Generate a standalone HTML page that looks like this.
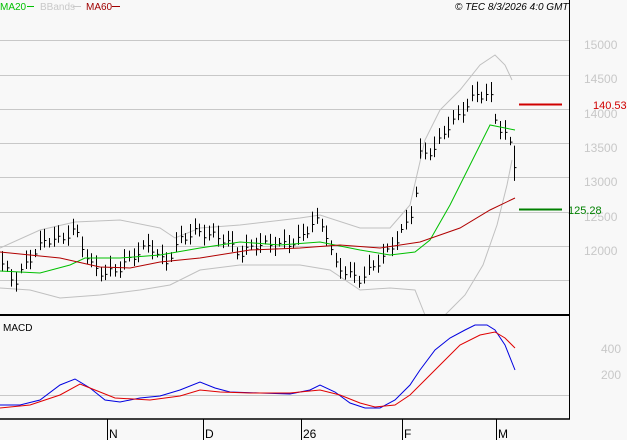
<!DOCTYPE html>
<html><head><meta charset="utf-8"><style>
body{margin:0;background:#f8f8f8;}
svg{display:block;font-family:"Liberation Sans",sans-serif;}
</style></head><body>
<svg id="s" width="627" height="440" xmlns="http://www.w3.org/2000/svg">
<rect width="627" height="440" fill="#f8f8f8"/>
<g stroke="#c8c8c8" stroke-width="1" fill="none">
<line x1="0" y1="40.5" x2="569" y2="40.5"/>
<line x1="0" y1="75.5" x2="569" y2="75.5"/>
<line x1="0" y1="109.5" x2="569" y2="109.5"/>
<line x1="0" y1="143.5" x2="569" y2="143.5"/>
<line x1="0" y1="177.5" x2="569" y2="177.5"/>
<line x1="0" y1="212.5" x2="569" y2="212.5"/>
<line x1="0" y1="246.5" x2="569" y2="246.5"/>
<line x1="0" y1="280.5" x2="569" y2="280.5"/>
<line x1="0" y1="395.5" x2="569" y2="395.5"/>
</g>
<g fill="#c8c8c8" font-size="12">
<text x="584" y="49">15000</text><text x="584" y="83">14500</text>
<text x="584" y="118">14000</text><text x="584" y="152">13500</text>
<text x="584" y="186">13000</text><text x="584" y="221">12500</text>
<text x="584" y="255">12000</text>
<text x="601" y="353">400</text><text x="601" y="379">200</text>
</g>
<g id="bb" stroke="#c0c0c0" fill="none"></g>
<g id="bars" stroke="#000" fill="none"></g>
<g id="ma" fill="none"></g>
<line x1="519" y1="104.5" x2="562" y2="104.5" stroke="#d00000" stroke-width="2"/>
<line x1="519" y1="209.5" x2="562" y2="209.5" stroke="#008000" stroke-width="2"/>
<text x="593" y="109" font-size="11" fill="#d00000">140.53</text>
<text x="568" y="214" font-size="11" fill="#008000">125.28</text>
<line x1="0" y1="315" x2="569" y2="315" stroke="#000" stroke-width="2"/>
<line x1="569.5" y1="0" x2="569.5" y2="419" stroke="#000"/>
<line x1="0" y1="419" x2="570" y2="419" stroke="#000" stroke-width="1.5"/>
<text x="3" y="331" font-size="10">MACD</text>
<g stroke="#000"><line x1="107.5" y1="419" x2="107.5" y2="440"/><line x1="203.5" y1="419" x2="203.5" y2="440"/><line x1="301.5" y1="419" x2="301.5" y2="440"/><line x1="402.5" y1="419" x2="402.5" y2="440"/><line x1="496.5" y1="419" x2="496.5" y2="440"/></g>
<g font-size="12"><text x="109" y="438">N</text><text x="205" y="438">D</text><text x="303" y="438">26</text><text x="404" y="438">F</text><text x="498" y="438">M</text></g>
<g font-size="10"><text x="0" y="10" fill="#00c000">MA20</text><line x1="27" y1="6.5" x2="34" y2="6.5" stroke="#00c000"/>
<text x="40" y="10" fill="#c8c8c8">BBands</text><line x1="73" y1="6.5" x2="81" y2="6.5" stroke="#c8c8c8"/>
<text x="86" y="10" fill="#a00000">MA60</text><line x1="112" y1="6.5" x2="120" y2="6.5" stroke="#a00000"/>
<text x="455" y="10" font-style="italic">© TEC 8/3/2026 4:0 GMT</text></g>
</svg>
<script>
function P(a){return "M"+a.map(p=>p.join(",")).join("L");}
function pl(g,pts,c,w){var e=document.createElementNS("http://www.w3.org/2000/svg","path");e.setAttribute("d",P(pts));e.setAttribute("stroke",c);e.setAttribute("stroke-width",w||1);e.setAttribute("fill","none");document.getElementById(g).appendChild(e);}
pl("bb",[[0,248],[40,230],[75,222],[120,220],[160,228],[175,238],[200,228],[240,225],[300,218],[320,215],[360,228],[390,228],[410,205],[425,140],[440,110],[460,90],[480,65],[495,55],[505,65],[512,80]],"#c0c0c0");
pl("bb",[[0,288],[30,290],[60,298],[100,295],[140,290],[170,285],[200,270],[240,265],[300,265],[330,270],[360,290],[390,288],[415,290],[425,315]],"#c0c0c0");
pl("bb",[[445,315],[465,295],[483,265],[497,225],[507,185],[512,160]],"#c0c0c0");
pl("ma",[[0,271],[40,273],[70,265],[85,258],[120,258],[160,255],[200,248],[240,242],[280,245],[320,242],[360,250],[390,255],[415,252],[430,240],[450,205],[470,165],[490,125],[505,128],[515,130]],"#00c000");
pl("ma",[[0,252],[30,255],[60,258],[100,267],[130,268],[160,262],[200,258],[250,250],[300,248],[340,245],[380,248],[420,242],[460,228],[490,210],[515,198]],"#b00000");
pl("ma",[[0,405],[20,405],[40,400],[60,385],[75,379],[90,388],[105,400],[120,402],[140,398],[160,396],[180,390],[200,382],[215,388],[230,392],[260,393],[290,394],[310,390],[320,385],[335,392],[350,403],[365,408],[380,408],[395,400],[410,385],[420,370],[435,350],[450,338],[465,330],[475,325],[487,325],[495,330],[505,345],[515,370]],"#0000e0");
pl("ma",[[0,408],[30,405],[60,395],[80,384],[95,390],[115,398],[150,400],[180,396],[200,390],[220,392],[250,393],[290,393],[320,390],[340,395],[360,403],[375,407],[395,405],[410,395],[425,380],[440,365],[460,345],[480,335],[495,332],[505,338],[515,348]],"#e00000");
var K=[[2,265],[15,283],[25,265],[45,240],[60,240],[75,230],[90,265],[105,275],[120,268],[135,255],[150,245],[165,265],[180,240],[195,232],[210,235],[225,240],[240,255],[255,245],[270,245],[285,245],[300,240],[315,220],[325,230],[335,265],[350,275],[360,280],[375,265],[390,250],[400,235],[410,218],[416,190],[420,155],[435,150],[445,130],[460,115],[475,95],[490,95],[497,125],[505,135],[512,150],[516,175]];
function f(x){for(var i=1;i<K.length;i++){if(x<=K[i][0]){var a=K[i-1],b=K[i];return a[1]+(b[1]-a[1])*(x-a[0])/(b[0]-a[0]);}}return K[K.length-1][1];}
var d="";for(var x=2;x<=516;x+=4.7){var X=Math.round(x)+.5,c=f(x)+Math.sin(x*1.7)*4,h=5+Math.abs(Math.sin(x*.9))*8;if(x>512){h=22;}d+="M"+X+","+(c-h)+"V"+(c+h*0.6)+"M"+X+","+c+"h2";}
var e=document.createElementNS("http://www.w3.org/2000/svg","path");e.setAttribute("d",d);e.setAttribute("stroke","#000");document.getElementById("bars").appendChild(e);
</script>
</body></html>
